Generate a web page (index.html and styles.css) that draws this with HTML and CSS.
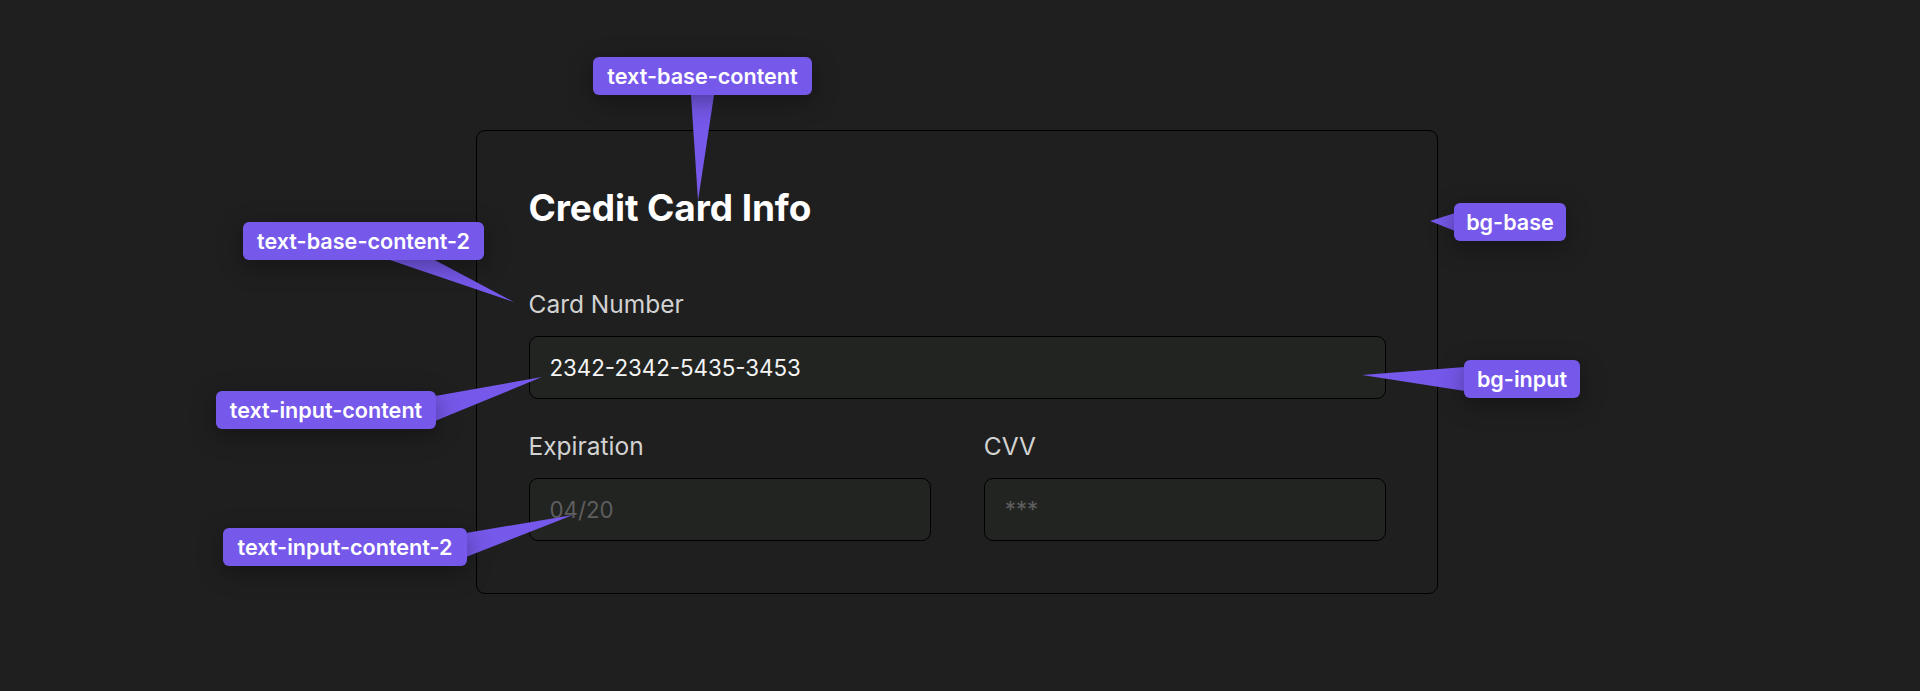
FILE: index.html
```html
<!DOCTYPE html>
<html lang="en">
<head>
<meta charset="utf-8">
<title>Credit Card Info</title>
<link rel="stylesheet" href="styles.css">
</head>
<body>
<main class="stage">
  <section class="card">
    <h1 class="card-title">Credit Card Info</h1>
    <div class="field">
      <label class="field-label" for="num">Card Number</label>
      <input class="field-input" id="num" type="text" value="2342-2342-5435-3453">
    </div>
    <div class="field-row">
      <div class="field">
        <label class="field-label" for="exp">Expiration</label>
        <input class="field-input" id="exp" type="text" placeholder="04/20">
      </div>
      <div class="field">
        <label class="field-label" for="cvv">CVV</label>
        <input class="field-input" id="cvv" type="text" placeholder="***">
      </div>
    </div>
  </section>

  <svg class="tails" width="1920" height="691" viewBox="0 0 1920 691" aria-hidden="true">
    <polygon points="691,95 714,95 698,201" />
    <polygon points="384,258 431,258 514,302" />
    <polygon points="435,396 435,421 542,377" />
    <polygon points="466,533 466,557 573,515" />
    <polygon points="1455,213 1455,231 1430,221" />
    <polygon points="1465,367 1465,391 1362,375" />
  </svg>

  <span class="tag tag-title">text-base-content</span>
  <span class="tag tag-label">text-base-content-2</span>
  <span class="tag tag-input">text-input-content</span>
  <span class="tag tag-placeholder">text-input-content-2</span>
  <span class="tag tag-base">bg-base</span>
  <span class="tag tag-bginput">bg-input</span>
</main>
</body>
</html>
```

FILE: styles.css
```css
* { box-sizing: border-box; }

html, body {
  margin: 0;
  padding: 0;
  background: #1f1f1f;
  font-family: Inter, "Noto Sans", "Liberation Sans", sans-serif;
}

.stage {
  position: relative;
  width: 1920px;
  height: 691px;
  padding: 130px 0 0 476px;
  overflow: hidden;
}

.card {
  width: 962px;
  background: #1f1f1f;
  border: 1.5px solid #000000;
  border-radius: 9px;
  padding: 51px 51px 52px 51.5px;
  display: flex;
  flex-direction: column;
  gap: 29px;
}

.card-title {
  margin: 0 0 23px;
  font-size: 37px;
  line-height: 52px;
  font-weight: 700;
  color: #ffffff;
  letter-spacing: -0.1px;
}

.field {
  display: flex;
  flex-direction: column;
  gap: 14px;
}

.field-row {
  display: grid;
  grid-template-columns: 1fr 1fr;
  column-gap: 53px;
}

.field-label {
  font-size: 24.5px;
  line-height: 36px;
  color: #d2d2d2;
}

.field-input {
  width: 100%;
  height: 63px;
  padding: 0 20px;
  background: #222422;
  border: 1.5px solid #000000;
  border-radius: 9px;
  font-family: inherit;
  font-size: 22.3px;
  color: #f5f5f5;
  outline: none;
}

.field-input::placeholder {
  color: #5e5e5e;
}

.tails {
  position: absolute;
  left: 0;
  top: 0;
  fill: #7658ea;
}

.tag {
  position: absolute;
  height: 38px;
  line-height: 38px;
  padding: 0 10px;
  background: #7658ea;
  color: #ffffff;
  font-size: 21.6px;
  font-weight: 600;
  border-radius: 6px;
  white-space: nowrap;
  text-align: center;
  box-shadow: 0 6px 24px rgba(0, 0, 0, 0.35);
}

.tag-title { left: 593px; top: 57px; width: 219px; }
.tag-label { left: 243px; top: 222px; width: 241px; }
.tag-input { left: 216px; top: 391px; width: 220px; }
.tag-placeholder { left: 223px; top: 528px; width: 244px; }
.tag-base { left: 1454px; top: 203px; width: 112px; }
.tag-bginput { left: 1464px; top: 360px; width: 116px; }
```
